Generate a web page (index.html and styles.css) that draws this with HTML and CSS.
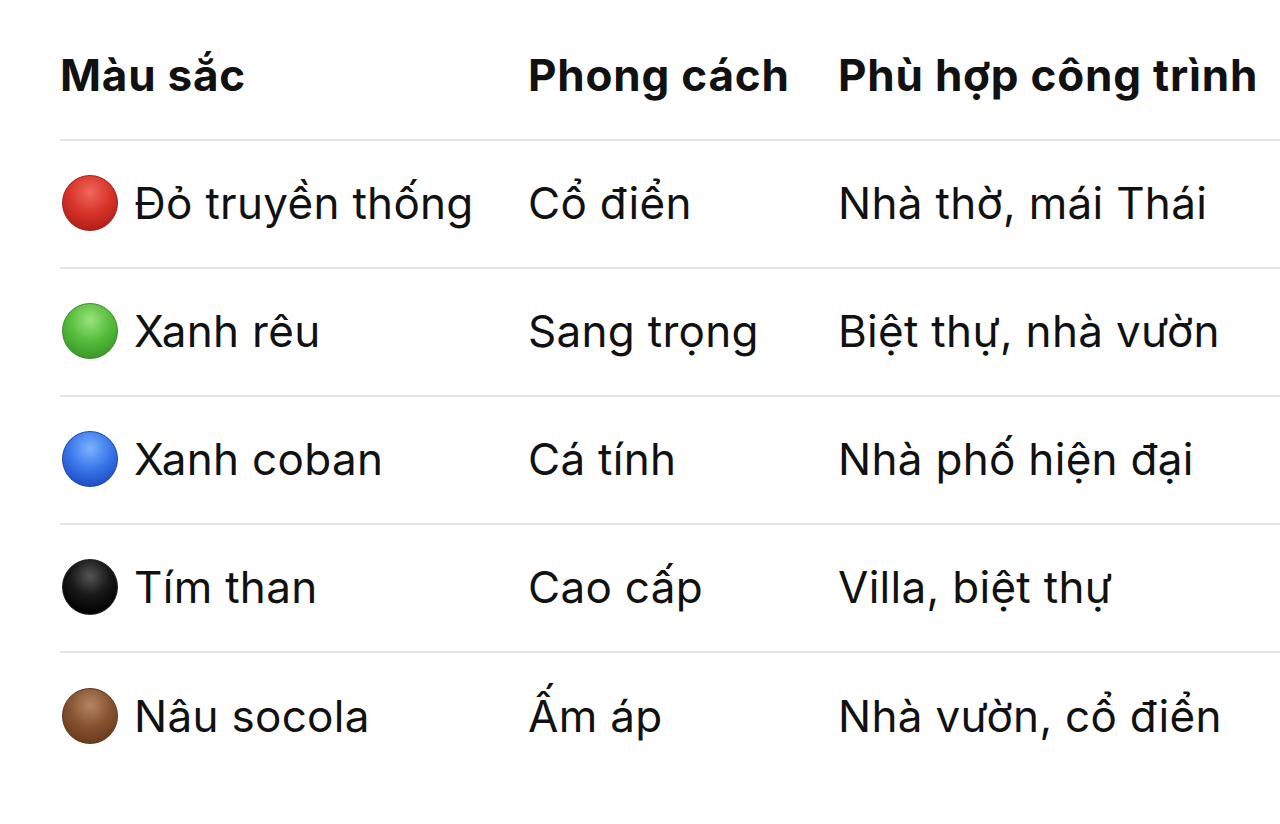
FILE: index.html
```html
<!DOCTYPE html>
<html lang="vi">
<head>
<meta charset="utf-8">
<link rel="stylesheet" href="styles.css">
</head>
<body>
<div class="table">
  <div class="row head">
    <div class="cell">Màu sắc</div>
    <div class="cell">Phong cách</div>
    <div class="cell">Phù hợp công trình</div>
  </div>
  <div class="row">
    <div class="cell"><span class="dot red"></span>Đỏ truyền thống</div>
    <div class="cell">Cổ điển</div>
    <div class="cell">Nhà thờ, mái Thái</div>
  </div>
  <div class="row">
    <div class="cell"><span class="dot green"></span>Xanh rêu</div>
    <div class="cell">Sang trọng</div>
    <div class="cell">Biệt thự, nhà vườn</div>
  </div>
  <div class="row">
    <div class="cell"><span class="dot blue"></span>Xanh coban</div>
    <div class="cell">Cá tính</div>
    <div class="cell">Nhà phố hiện đại</div>
  </div>
  <div class="row">
    <div class="cell"><span class="dot black"></span>Tím than</div>
    <div class="cell">Cao cấp</div>
    <div class="cell">Villa, biệt thự</div>
  </div>
  <div class="row last">
    <div class="cell"><span class="dot brown"></span>Nâu socola</div>
    <div class="cell">Ấm áp</div>
    <div class="cell">Nhà vườn, cổ điển</div>
  </div>
</div>
</body>
</html>
```

FILE: styles.css
```css
html, body {
  margin: 0;
  padding: 0;
  background: #ffffff;
  overflow: hidden;
}
body {
  width: 1280px;
  height: 824px;
  font-family: Inter, "Noto Sans", sans-serif;
  color: #111111;
}
.table {
  margin-left: 60px;
  width: 1220px;
  overflow: hidden;
}
.row {
  display: grid;
  grid-template-columns: 468px 310px 1fr;
  height: 128px;
  align-items: center;
  border-bottom: 2px solid #e3e3e3;
  box-sizing: border-box;
  font-size: 44px;
  font-weight: 400;
  line-height: 54px;
}
.row > .cell {
  padding-bottom: 2px;
}
.row.head {
  height: 141px;
  font-weight: 700;
  align-items: start;
  padding-top: 48px;
}
.row.head .cell {
  letter-spacing: 0.8px;
}
.row.last {
  border-bottom: none;
}
.cell {
  display: flex;
  align-items: center;
  white-space: nowrap;
  letter-spacing: 0.3px;
}
.dot {
  width: 56px;
  height: 56px;
  border-radius: 50%;
  margin-left: 2px;
  margin-right: 16px;
  flex: none;
  box-sizing: border-box;
}
.red {
  background: radial-gradient(circle at 50% 30%, #f0675c 0%, #d8342a 45%, #b3201a 80%, #8f1812 100%);
  border: 1px solid #a02018;
}
.green {
  background: radial-gradient(circle at 50% 30%, #9be27d 0%, #55bd3c 45%, #3d9a2a 80%, #2f7d20 100%);
  border: 1px solid #3a8a28;
}
.blue {
  background: radial-gradient(circle at 50% 30%, #7db2ff 0%, #3a78ea 45%, #1f50c6 80%, #173ea0 100%);
  border: 1px solid #1e46a8;
}
.black {
  background: radial-gradient(circle at 50% 30%, #555555 0%, #1a1a1a 40%, #000000 80%, #000000 100%);
  border: 1px solid #222222;
}
.brown {
  background: radial-gradient(circle at 50% 30%, #b58661 0%, #865331 45%, #6a3c1e 80%, #552d14 100%);
  border: 1px solid #5d3318;
}
```
